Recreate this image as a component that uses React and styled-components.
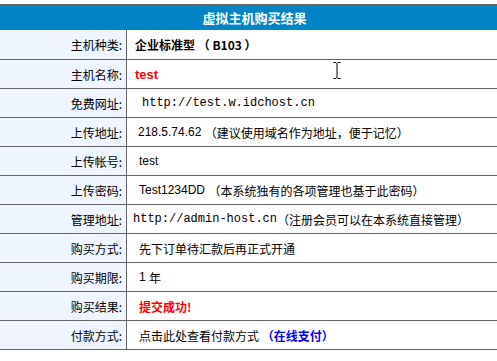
import React from "react";
import styled, { createGlobalStyle } from "styled-components";

const GlobalStyle = createGlobalStyle`
  body {
    margin: 0;
    background: #ffffff;
    font-family: "Liberation Sans", "Noto Sans CJK SC", sans-serif;
    font-size: 12px;
    color: #000000;
    text-spacing-trim: space-all;
  }
`;

const Page = styled.div`
  position: relative;
  padding-top: 4px;
`;

const Table = styled.div`
  border-top: 1px solid #666666;
`;

const Header = styled.div`
  height: 24px;
  display: flex;
  align-items: center;
  justify-content: center;
  padding-left: 12px;
  background: #0084c6;
  color: #ffffff;
  font-family: "Noto Sans CJK SC", sans-serif;
  font-weight: bold;
  font-size: 13px;
  border-bottom: 1px solid #666666;
`;

const Row = styled.div`
  display: grid;
  grid-template-columns: 126px 1fr;
  height: ${(p) => p.$h}px;
  border-bottom: 1px solid #666666;
`;

const Label = styled.div`
  display: flex;
  align-items: center;
  justify-content: flex-end;
  padding-right: 4px;
  background: #eef5ff;
  font-family: "Noto Sans CJK SC", sans-serif;
  font-size: 12px;
`;

const Value = styled.div`
  display: flex;
  align-items: center;
  padding-left: ${(p) => p.$indent}px;
  border-left: 1px solid #666666;
  white-space: pre;
  font-family: "Liberation Sans", "Noto Sans CJK SC", sans-serif;
  font-size: 12px;
`;

const Bold = styled.span`
  font-weight: bold;
  font-family: "Noto Sans CJK SC", sans-serif;
`;

const Red = styled.span`
  color: #ff0000;
  font-weight: bold;
  font-size: ${(p) => p.$size || 12}px;
`;

const Mono = styled.span`
  font-family: "Liberation Mono", monospace;
  font-size: 12px;
`;

const Cjk = styled.span`
  font-family: "Noto Sans CJK SC", sans-serif;
`;

const PayLink = styled.a`
  color: #0000ff;
  font-weight: bold;
  text-decoration: none;
  font-family: "Noto Sans CJK SC", sans-serif;
`;

const Cursor = styled.svg`
  position: absolute;
  left: 333px;
  top: 62px;
`;

const rows = [
  { label: "主机种类", h: 29, indent: 8, value: <Bold>企业标准型 （ B103 ）</Bold> },
  { label: "主机名称", h: 28, indent: 8, value: <Red $size={13}>test</Red> },
  { label: "免费网址", h: 28, indent: 15, value: <Mono>http://test.w.idchost.cn</Mono> },
  {
    label: "上传地址",
    h: 28,
    indent: 11,
    value: (
      <>
        218.5.74.62 <Cjk>（建议使用域名作为地址，便于记忆）</Cjk>
      </>
    ),
  },
  { label: "上传帐号", h: 28, indent: 12, value: "test" },
  {
    label: "上传密码",
    h: 28,
    indent: 12,
    value: (
      <>
        Test1234DD <Cjk>（本系统独有的各项管理也基于此密码）</Cjk>
      </>
    ),
  },
  {
    label: "管理地址",
    h: 28,
    indent: 6,
    value: (
      <>
        <Mono>http://admin-host.cn</Mono>
        <Cjk>（注册会员可以在本系统直接管理）</Cjk>
      </>
    ),
  },
  { label: "购买方式", h: 28, indent: 12, value: <Cjk>先下订单待汇款后再正式开通</Cjk> },
  {
    label: "购买期限",
    h: 28,
    indent: 12,
    value: (
      <>
        1 <Cjk>年</Cjk>
      </>
    ),
  },
  {
    label: "购买结果",
    h: 28,
    indent: 12,
    value: (
      <Red>
        <Cjk>提交成功!</Cjk>
      </Red>
    ),
  },
  {
    label: "付款方式",
    h: 28,
    indent: 12,
    value: (
      <>
        <Cjk>点击此处查看付款方式 </Cjk>
        <PayLink href="#pay">（在线支付）</PayLink>
      </>
    ),
  },
];

const App = () => {
  return (
    <Page>
      <GlobalStyle />
      <Table>
        <Header>虚拟主机购买结果</Header>
        {rows.map((row) => (
          <Row key={row.label} $h={row.h}>
            <Label>{row.label}:</Label>
            <Value $indent={row.indent}>{row.value}</Value>
          </Row>
        ))}
      </Table>
      <Cursor width="8" height="17" viewBox="0 0 8 17">
        <path
          d="M0.5 0.5 H3 L4 1.5 L5 0.5 H7.5 M4 1.5 V15.5 M0.5 16.5 H3 L4 15.5 L5 16.5 H7.5"
          stroke="#000"
          strokeWidth="1"
          fill="none"
        />
      </Cursor>
    </Page>
  );
};

export default App;
